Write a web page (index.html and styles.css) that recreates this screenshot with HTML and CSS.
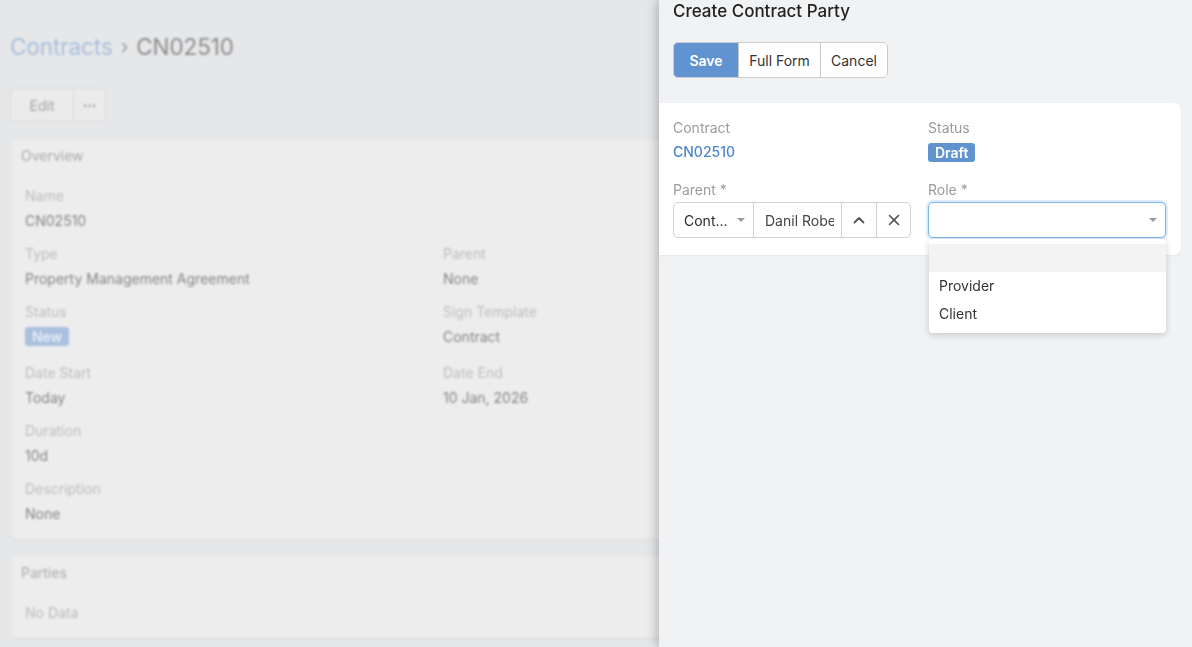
FILE: index.html
```html
<!DOCTYPE html>
<html lang="en">
<head>
<meta charset="utf-8">
<title>CN02510</title>
<link rel="stylesheet" href="styles.css">
</head>
<body>
<div class="page">
  <div class="breadcrumb">
    <span class="crumb-link">Contracts</span>
    <span class="crumb-sep">›</span>
    <span class="crumb-current">CN02510</span>
  </div>
  <div class="btn-group-bg">
    <span class="bg-btn bg-btn-edit">Edit</span>
    <span class="bg-btn bg-btn-more">•••</span>
  </div>
  <section class="bg-card">
    <div class="bg-card-title">Overview</div>
    <div class="bg-grid">
      <div class="bg-field bg-full"><div class="bg-label">Name</div><div class="bg-value">CN02510</div></div>
      <div class="bg-field"><div class="bg-label">Type</div><div class="bg-value">Property Management Agreement</div></div>
      <div class="bg-field"><div class="bg-label">Parent</div><div class="bg-value">None</div></div>
      <div class="bg-field"><div class="bg-label">Status</div><div class="bg-value"><span class="bg-badge">New</span></div></div>
      <div class="bg-field"><div class="bg-label">Sign Template</div><div class="bg-value">Contract</div></div>
      <div class="bg-field"><div class="bg-label">Date Start</div><div class="bg-value">Today</div></div>
      <div class="bg-field"><div class="bg-label">Date End</div><div class="bg-value">10 Jan, 2026</div></div>
      <div class="bg-field bg-full"><div class="bg-label">Duration</div><div class="bg-value">10d</div></div>
      <div class="bg-field bg-full"><div class="bg-label">Description</div><div class="bg-value">None</div></div>
    </div>
  </section>
  <section class="bg-card bg-card-parties">
    <div class="bg-card-title">Parties</div>
    <div class="bg-empty">No Data</div>
  </section>
</div>

<aside class="drawer">
  <h1 class="drawer-title">Create Contract Party</h1>
  <div class="drawer-actions">
    <button class="btn btn-primary">Save</button>
    <button class="btn">Full Form</button>
    <button class="btn">Cancel</button>
  </div>
  <div class="form-card">
    <div class="form-grid">
      <div class="form-field">
        <div class="form-label">Contract</div>
        <div class="form-link">CN02510</div>
      </div>
      <div class="form-field">
        <div class="form-label">Status</div>
        <div class="form-value"><span class="badge">Draft</span></div>
      </div>
      <div class="form-field">
        <div class="form-label">Parent *</div>
        <div class="input-group">
          <div class="ig-select">Cont...<span class="caret"></span></div>
          <div class="ig-text"><span class="ig-text-inner">Danil Robe</span></div>
          <div class="ig-icon">
            <svg width="14" height="14" viewBox="0 0 14 14"><path d="M2.5 9.5 L7 5 L11.5 9.5" fill="none" stroke="#555" stroke-width="1.8" stroke-linecap="round" stroke-linejoin="round"/></svg>
          </div>
          <div class="ig-icon">
            <svg width="14" height="14" viewBox="0 0 14 14"><path d="M2.5 2.5 L11.5 11.5 M11.5 2.5 L2.5 11.5" fill="none" stroke="#555" stroke-width="1.6" stroke-linecap="round"/></svg>
          </div>
        </div>
      </div>
      <div class="form-field">
        <div class="form-label">Role *</div>
        <div class="select-wrap">
          <div class="select-box"><span class="caret"></span></div>
          <ul class="dropdown">
            <li class="option option-active">&nbsp;</li>
            <li class="option">Provider</li>
            <li class="option">Client</li>
          </ul>
        </div>
      </div>
    </div>
  </div>
</aside>
</body>
</html>
```
FILE: styles.css
```css
* { box-sizing: border-box; }
html, body { margin: 0; padding: 0; }
body {
  width: 1192px;
  height: 647px;
  overflow: hidden;
  background: #e6e7e9;
  font-family: Inter, "Noto Sans", sans-serif;
  font-size: 14px;
}

/* ---------- background page (dimmed, blurred) ---------- */
.page {
  padding: 0 11px 0 10px;
  filter: blur(1px);
}
.breadcrumb {
  display: flex;
  align-items: center;
  gap: 8px;
  height: 88px;
  padding-top: 6px;
  font-size: 22.5px;
  line-height: 28px;
  letter-spacing: -0.1px;
}
.crumb-link { color: #a9bfdc; }
.crumb-sep { color: #9c9c9c; font-size: 20px; }
.crumb-current { color: #8c8c8c; }
.btn-group-bg {
  display: flex;
  width: 96px;
  height: 34px;
  border: 1px solid #d9d9d9;
  border-radius: 5px;
  background: #ebebeb;
  margin-bottom: 18px;
}
.bg-btn {
  display: flex;
  align-items: center;
  justify-content: center;
  color: #a3a3a3;
  font-size: 14px;
}
.bg-btn-edit { width: 63px; border-right: 1px solid #d9d9d9; }
.bg-btn-more { width: 31px; font-size: 8px; }
.bg-card {
  background: #ededed;
  border-radius: 6px;
  margin-left: 1px;
  padding: 6px 14px 13px 10px;
  box-shadow: 0 1px 2px rgba(0,0,0,0.06);
}
.bg-card-title {
  color: #ababab;
  font-size: 14px;
  line-height: 20px;
  margin-bottom: 20px;
}
.bg-grid {
  display: grid;
  grid-template-columns: 418px 1fr;
  row-gap: 11px;
  padding-left: 4px;
}
.bg-full { grid-column: 1 / -1; }
.bg-label { color: #bdbdbd; line-height: 20px; margin-bottom: 3px; }
.bg-value { color: #858585; line-height: 24px; }
.bg-badge {
  display: inline-block;
  background: #aac0df;
  color: #eef2f8;
  border-radius: 3px;
  padding: 0 7px;
  line-height: 19px;
  font-weight: 500;
  margin-top: 2px;
}
.bg-grid .bg-field:nth-child(6), .bg-grid .bg-field:nth-child(7) { margin-top: 3px; }
.bg-card-parties {
  margin-top: 18px;
  height: 81px;
}
.bg-card-parties .bg-card-title { margin-bottom: 20px; }
.bg-empty { color: #bababa; padding-left: 4px; line-height: 20px; }

/* ---------- drawer ---------- */
.drawer {
  position: fixed;
  top: 0;
  right: 0;
  width: 533px;
  height: 647px;
  background: #f1f2f4;
  box-shadow: -3px 0 10px rgba(0,0,0,0.22);
}
.drawer-title {
  margin: 0;
  padding: 0 14px;
  font-size: 17px;
  font-weight: 500;
  line-height: 22px;
  color: #222;
}
.drawer-actions {
  display: flex;
  margin: 20px 14px 0;
  width: max-content;
  border: 1px solid #c9cbcf;
  border-radius: 5px;
  overflow: hidden;
  height: 36px;
}
.btn {
  font-family: inherit;
  font-size: 14px;
  border: none;
  border-left: 1px solid #c9cbcf;
  background: #fff;
  color: #333;
  height: 100%;
  padding: 0;
  cursor: pointer;
}
.btn-primary {
  border-left: none;
  background: #6193d0;
  color: #fff;
  font-weight: 600;
  width: 64px;
}
.btn:nth-child(2) { width: 82px; }
.btn:nth-child(3) { width: 67px; }

.form-card {
  margin: 25px 11px 0 0;
  background: #fff;
  border-radius: 0 7px 7px 0;
  padding: 16px 15px 17px 14px;
  box-shadow: 0 1px 2px rgba(0,0,0,0.05);
}
.form-grid {
  display: grid;
  grid-template-columns: 238px 238px;
  column-gap: 17px;
  row-gap: 17px;
}
.form-label {
  color: #9b9b9b;
  line-height: 17px;
  margin-bottom: 4px;
}
.form-link {
  color: #4b87cf;
  font-weight: 500;
  line-height: 24px;
}
.form-value { height: 24px; display: flex; align-items: center; }
.badge {
  display: inline-block;
  background: #6193d0;
  color: #fff;
  font-weight: 600;
  border-radius: 3px;
  padding: 0 7px;
  line-height: 19px;
  font-size: 14px;
}
.input-group {
  display: flex;
  height: 36px;
  border: 1px solid #cfd1d4;
  border-radius: 5px;
  overflow: hidden;
}
.ig-select {
  width: 80px;
  display: flex;
  align-items: center;
  padding-left: 10px;
  position: relative;
  border-right: 1px solid #cfd1d4;
  color: #2b2b2b;
}
.ig-select .caret { right: 8px; }
.ig-text {
  width: 88px;
  display: flex;
  align-items: center;
  padding: 0 7px 0 11px;
  border-right: 1px solid #cfd1d4;
  color: #444;
}
.ig-text-inner {
  display: block;
  overflow: hidden;
  white-space: nowrap;
  width: 100%;
}
.ig-icon {
  width: 35px;
  display: flex;
  align-items: center;
  justify-content: center;
  border-right: 1px solid #cfd1d4;
}
.ig-icon:last-child { border-right: none; flex: 1; }
.caret {
  position: absolute;
  top: 50%;
  margin-top: -2px;
  width: 0;
  height: 0;
  border-left: 4px solid transparent;
  border-right: 4px solid transparent;
  border-top: 4px solid #999;
}
.select-wrap { position: relative; }
.select-box {
  position: relative;
  height: 36px;
  border: 1px solid #7db4ec;
  border-radius: 5px;
  box-shadow: 0 0 0 2px rgba(125,180,236,0.25);
  background: #fff;
}
.select-box .caret { right: 8px; }
.dropdown {
  position: absolute;
  top: 37px;
  left: 1px;
  width: 237px;
  margin: 0;
  padding: 5px 0;
  list-style: none;
  background: #fff;
  border-radius: 4px;
  box-shadow: 0 2px 6px rgba(0,0,0,0.18);
  z-index: 5;
}
.option {
  height: 28px;
  line-height: 28px;
  padding-left: 10px;
  color: #333;
}
.option-active { background: #f3f3f3; }
```
